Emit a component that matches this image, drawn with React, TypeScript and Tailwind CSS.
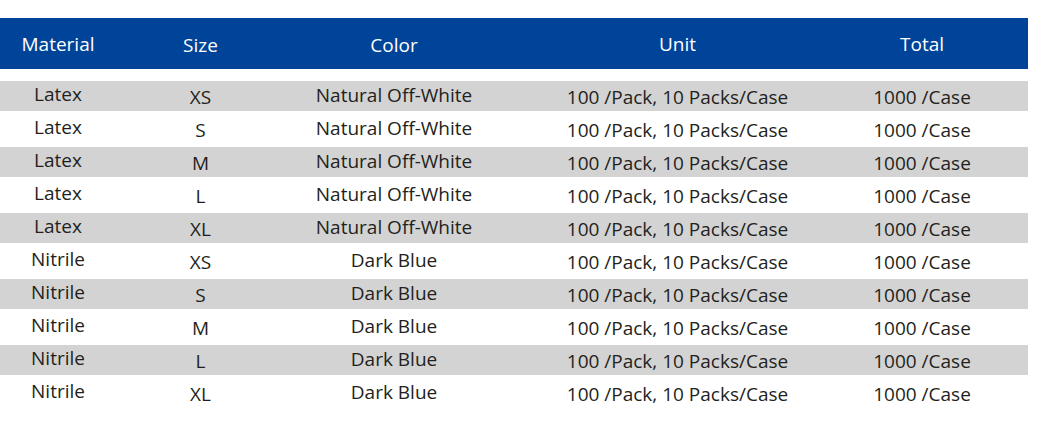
const rows = [
  ["Latex", "XS", "Natural Off-White"],
  ["Latex", "S", "Natural Off-White"],
  ["Latex", "M", "Natural Off-White"],
  ["Latex", "L", "Natural Off-White"],
  ["Latex", "XL", "Natural Off-White"],
  ["Nitrile", "XS", "Dark Blue"],
  ["Nitrile", "S", "Dark Blue"],
  ["Nitrile", "M", "Dark Blue"],
  ["Nitrile", "L", "Dark Blue"],
  ["Nitrile", "XL", "Dark Blue"],
];

const cols = "grid grid-cols-[116px_169px_218px_349px_140px_1fr]";

export default function App() {
  return (
    <div
      className="w-[1042px] h-[428px] bg-white pt-[18px] text-[19px] leading-[26px]"
      style={{ fontFamily: '"Open Sans", "Noto Sans", sans-serif' }}
    >
      <div className="w-[1028px]">
        <div className={`${cols} h-[51px] bg-[#004499] text-white text-center pt-[13px]`}>
          <div>Material</div>
          <div className="pt-px">Size</div>
          <div className="pt-px">Color</div>
          <div>Unit</div>
          <div>Total</div>
          <div />
        </div>

        <div className="mt-[12px] flex flex-col gap-[3px] text-[#231f20]">
          {rows.map(([material, size, color], i) => (
            <div
              key={i}
              className={`${cols} h-[30px] text-center ${i % 2 === 0 ? "bg-[#d3d3d3]" : "bg-white"}`}
            >
              <div>{material}</div>
              <div className="pt-[3px]">{size}</div>
              <div className="pt-px">{color}</div>
              <div className="pt-[3px]">100 /Pack, 10 Packs/Case</div>
              <div className="pt-[3px]">1000 /Case</div>
              <div />
            </div>
          ))}
        </div>
      </div>
    </div>
  );
}
